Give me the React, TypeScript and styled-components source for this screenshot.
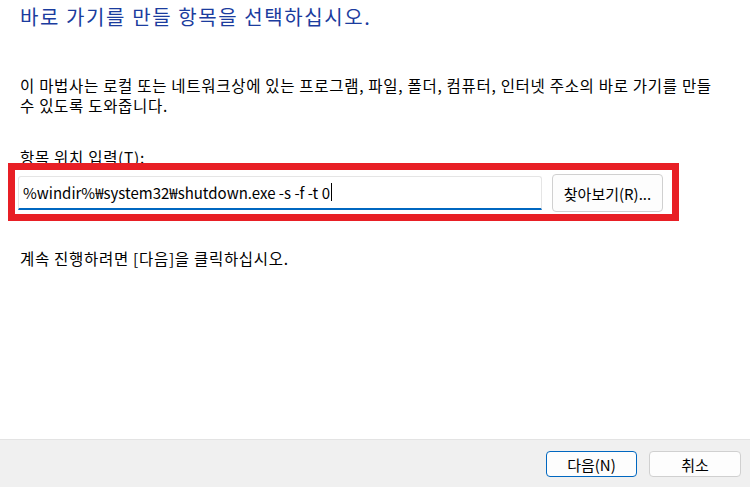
import React from "react";
import styled, { createGlobalStyle } from "styled-components";

const Global = createGlobalStyle`
  html, body { margin: 0; padding: 0; background: #ffffff; }
  body {
    font-family: "Noto Sans CJK KR", "Noto Sans", sans-serif;
    color: #000;
    -webkit-font-smoothing: antialiased;
  }
`;

const Window = styled.div`
  width: 750px;
  height: 487px;
  display: flex;
  flex-direction: column;
  background: #ffffff;
  overflow: hidden;
`;

const Content = styled.div`
  position: relative;
  flex: 1;
  padding: 0 20px;
`;

const Title = styled.h1`
  margin: 3px 0 0 0;
  font-size: 20px;
  font-weight: 400;
  line-height: 28px;
  color: #1b3c9e;
  letter-spacing: 1.6px;
  white-space: nowrap;
`;

const Paragraph = styled.p<{ $top: number }>`
  margin: ${(p) => p.$top}px 0 0 0;
  font-size: 15.5px;
  line-height: 20px;
  font-weight: 400;
  color: #000;
  letter-spacing: 0.7px;
  white-space: nowrap;
`;

const Hotkey = styled.span`
  text-decoration: underline;
`;

const FieldRow = styled.div`
  display: flex;
  align-items: center;
  gap: 10px;
  margin: 7px 0 0 -2px;
  width: 645px;
`;

const TextBox = styled.div`
  box-sizing: border-box;
  width: 524px;
  height: 34px;
  border: 1px solid #e5e5e5;
  border-bottom: 2px solid #0067c0;
  border-radius: 3px 3px 0 0;
  background: #ffffff;
  display: flex;
  align-items: center;
  padding: 0 0 1px 4px;
  font-family: "Noto Sans CJK KR", sans-serif;
  font-size: 15px;
  color: #000;
  white-space: nowrap;
`;

const Caret = styled.span`
  display: inline-block;
  width: 1px;
  height: 18px;
  background: #000;
  margin-left: 1px;
`;

const PushButton = styled.button<{ $w: number; $h: number; $primary?: boolean }>`
  box-sizing: border-box;
  width: ${(p) => p.$w}px;
  height: ${(p) => p.$h}px;
  border: 1px solid ${(p) => (p.$primary ? "#0067c0" : "#d0d0d0")};
  border-radius: 4px;
  background: #fdfdfd;
  font-family: "Noto Sans CJK KR", sans-serif;
  font-size: 15px;
  color: #000;
  padding: 0;
  display: flex;
  align-items: center;
  justify-content: center;
  line-height: 1;
  white-space: nowrap;
`;

const Highlight = styled.div`
  position: absolute;
  left: 8px;
  top: 163px;
  width: 671px;
  height: 58px;
  box-sizing: border-box;
  border: 7px solid #e81f25;
  pointer-events: none;
`;

const Footer = styled.div`
  height: 48px;
  box-sizing: border-box;
  border-top: 1px solid #e3e3e3;
  background: #f0f0f0;
  display: flex;
  justify-content: flex-end;
  align-items: flex-start;
  gap: 12px;
  padding: 11px 9px 0 0;
`;

export default function App() {
  return (
    <>
      <Global />
      <Window>
        <Content>
          <Title>바로 가기를 만들 항목을 선택하십시오.</Title>
          <Paragraph $top={44}>
            이 마법사는 로컬 또는 네트워크상에 있는 프로그램, 파일, 폴더, 컴퓨터, 인터넷 주소의 바로 가기를 만들
            <br />
            수 있도록 도와줍니다.
          </Paragraph>
          <Paragraph $top={32}>
            항목 위치 입력(<Hotkey>T</Hotkey>):
          </Paragraph>
          <FieldRow>
            <TextBox>
              %windir%₩system32₩shutdown.exe -s -f -t 0
              <Caret />
            </TextBox>
            <PushButton $w={111} $h={38}>
              찾아보기(R)...
            </PushButton>
          </FieldRow>
          <Paragraph $top={36}>계속 진행하려면 [다음]을 클릭하십시오.</Paragraph>
          <Highlight />
        </Content>
        <Footer>
          <PushButton $w={91} $h={26} $primary>
            다음(N)
          </PushButton>
          <PushButton $w={92} $h={26}>
            취소
          </PushButton>
        </Footer>
      </Window>
    </>
  );
}
